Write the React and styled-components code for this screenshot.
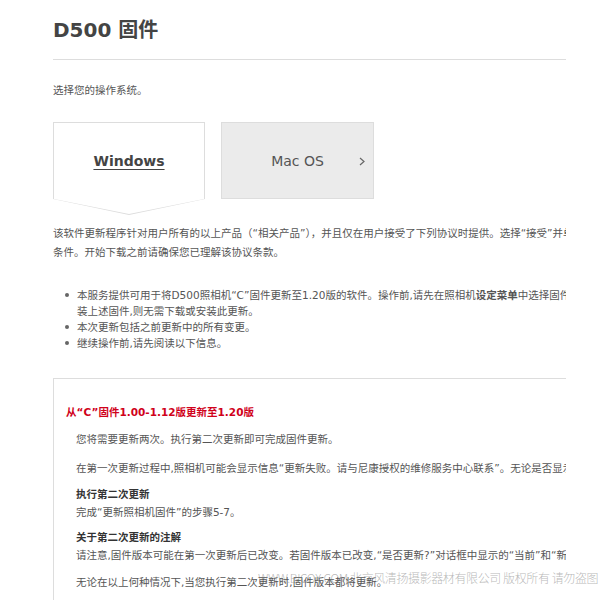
import styled, { createGlobalStyle } from 'styled-components';

const GlobalStyle = createGlobalStyle`
  html, body {
    margin: 0;
    padding: 0;
    background: #fff;
  }
  body {
    font-family: "DejaVu Sans", "Noto Sans CJK SC", sans-serif;
    color: #555;
  }
`;

const Page = styled.div`
  position: relative;
  width: 600px;
  height: 600px;
  overflow: hidden;
`;

const Frame = styled.div`
  width: 566px;
  height: 600px;
  overflow: hidden;
`;

const Content = styled.div`
  width: 900px;
  padding: 18px 0 0 53px;
`;

const Title = styled.h1`
  margin: 0;
  font-size: 20px;
  line-height: 24px;
  font-weight: bold;
  color: #444;
`;

const Rule = styled.div`
  margin-top: 17px;
  width: 513px;
  height: 1px;
  background: #ddd;
`;

const Text = styled.div`
  font-size: 10.5px;
  line-height: ${props => props.lh || 16}px;
  margin-top: ${props => props.mt || 0}px;
  white-space: nowrap;
  color: ${props => (props.dark ? '#333' : '#555')};
  font-weight: ${props => (props.bold ? 'bold' : 'normal')};
  padding-left: ${props => props.indent || 0}px;
`;

const Tabs = styled.div`
  display: flex;
  gap: 16px;
  margin-top: 24px;
`;

const Tab = styled.div`
  position: relative;
  display: flex;
  align-items: center;
  justify-content: center;
  box-sizing: border-box;
  width: ${props => (props.active ? 152 : 153)}px;
  height: 77px;
  border: 1px solid #ddd;
  border-bottom: ${props => (props.active ? 'none' : '1px solid #ddd')};
  background: ${props => (props.active ? '#fff' : '#ebebeb')};
  font-size: 14px;
  color: ${props => (props.active ? '#444' : '#555')};
  font-weight: ${props => (props.active ? 'bold' : 'normal')};

  ${props => props.active && `
    &::before, &::after {
      content: '';
      position: absolute;
      top: 100%;
      clip-path: polygon(0 0, 100% 0, 50% 100%);
    }
    &::before {
      left: -1px;
      right: -1px;
      height: 16px;
      background: #ddd;
    }
    &::after {
      left: 0;
      right: 0;
      height: 15px;
      background: #fff;
    }
  `}
`;

const TabLabel = styled.span`
  text-decoration: ${props => (props.underline ? 'underline' : 'none')};
  text-underline-offset: 3px;
`;

const Chevron = styled.svg`
  position: absolute;
  right: 8px;
  top: 34px;
`;

const List = styled.ul`
  list-style: none;
  margin: 25px 0 0;
  padding: 0;
`;

const Item = styled.li`
  position: relative;
  padding-left: 24px;
  font-size: 10.5px;
  line-height: 16px;
  white-space: nowrap;

  &::before {
    content: '';
    position: absolute;
    left: 12px;
    top: 6px;
    width: 4px;
    height: 4px;
    border-radius: 50%;
    background: #666;
  }
`;

const Notice = styled.div`
  margin-top: 27px;
  border-top: 1px solid #ddd;
  border-left: 1px solid #ddd;
  padding: 24px 0 40px 12px;
`;

const RedHeading = styled.div`
  font-size: 10.5px;
  line-height: 18px;
  font-weight: bold;
  color: #d0021b;
  white-space: nowrap;
`;

const Watermark = styled.div`
  position: absolute;
  left: 258px;
  top: 569px;
  font-family: "Noto Sans CJK SC", sans-serif;
  font-size: 12px;
  letter-spacing: -0.4px;
  font-weight: 300;
  color: rgba(110, 110, 110, 0.5);
  white-space: nowrap;
  pointer-events: none;
`;

export default function App() {
  return (
    <>
      <GlobalStyle />
      <Page>
        <Frame>
          <Content>
            <Title>D500 固件</Title>
            <Rule />
            <Text mt={22}>选择您的操作系统。</Text>

            <Tabs>
              <Tab active>
                <TabLabel underline>Windows</TabLabel>
              </Tab>
              <Tab>
                <TabLabel>Mac OS</TabLabel>
                <Chevron width="6" height="9" viewBox="0 0 6 9">
                  <polyline points="1,1 5,4.5 1,8" fill="none" stroke="#666" strokeWidth="1.2" />
                </Chevron>
              </Tab>
            </Tabs>

            <Text mt={25} lh={19}>
              该软件更新程序针对用户所有的以上产品（“相关产品”），并且仅在用户接受了下列协议时提供。选择“接受”并单击“下载”，即表示您已接受协议的
              <br />
              条件。开始下载之前请确保您已理解该协议条款。
            </Text>

            <List>
              <Item>
                本服务提供可用于将D500照相机“C”固件更新至1.20版的软件。操作前,请先在照相机<b>设定菜单</b>中选择固件版本选项，确认照相机固件版本。若已安
                <br />
                装上述固件,则无需下载或安装此更新。
              </Item>
              <Item>本次更新包括之前更新中的所有变更。</Item>
              <Item>继续操作前,请先阅读以下信息。</Item>
            </List>

            <Notice>
              <RedHeading>从“C”固件1.00-1.12版更新至1.20版</RedHeading>
              <Text lh={18} mt={9} indent={10}>您将需要更新两次。执行第二次更新即可完成固件更新。</Text>
              <Text lh={18} mt={11} indent={10}>
                在第一次更新过程中,照相机可能会显示信息“更新失败。请与尼康授权的维修服务中心联系”。无论是否显示此信息，请继续执行第二次更新。
              </Text>
              <Text lh={18} mt={8} indent={10} bold dark>执行第二次更新</Text>
              <Text lh={18} indent={10}>完成“更新照相机固件”的步骤5-7。</Text>
              <Text lh={18} mt={7} indent={10} bold dark>关于第二次更新的注解</Text>
              <Text lh={18} indent={10}>
                请注意,固件版本可能在第一次更新后已改变。若固件版本已改变,“是否更新?”对话框中显示的“当前”和“新”固件版本可能相同。
              </Text>
              <Text lh={18} mt={9} indent={10}>无论在以上何种情况下,当您执行第二次更新时,固件版本都将更新。</Text>
            </Notice>
          </Content>
        </Frame>
        <Watermark>WWW.BICOX.COM 北京风清扬摄影器材有限公司 版权所有 请勿盗图</Watermark>
      </Page>
    </>
  );
}
